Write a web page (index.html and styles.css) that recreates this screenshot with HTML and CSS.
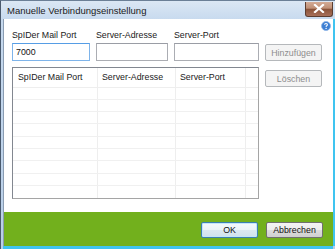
FILE: index.html
```html
<!DOCTYPE html>
<html lang="de">
<head>
<meta charset="utf-8">
<title>Manuelle Verbindungseinstellung</title>
<link rel="stylesheet" href="styles.css">
</head>
<body>
<div class="window">
  <div class="titlebar">
    <span class="title">Manuelle Verbindungseinstellung</span>
    <button class="close" aria-label="Schließen">
      <svg width="12" height="9" viewBox="0 0 12 9"><path d="M2 1 L10 8 M10 1 L2 8" stroke="#fff" stroke-width="2.2" stroke-linecap="square"/></svg>
    </button>
  </div>
  <div class="client">
    <div class="content">
      <span class="help">
        <svg width="10" height="10" viewBox="0 0 10 10"><circle cx="5" cy="5" r="4.5" fill="#3d7fd3" stroke="#8db4e6" stroke-width="0.8"/><path d="M3.6 3.8 Q3.7 2.5 5 2.5 Q6.4 2.5 6.4 3.7 Q6.4 4.5 5.3 5 L5.1 5.9" fill="none" stroke="#fff" stroke-width="1.1"/><circle cx="5.1" cy="7.4" r="0.7" fill="#fff"/></svg>
      </span>
      <div class="grid">
        <label class="lbl">SpIDer Mail Port</label>
        <label class="lbl">Server-Adresse</label>
        <label class="lbl">Server-Port</label>
        <span></span>
        <input class="field focus" value="7000">
        <input class="field">
        <input class="field">
        <button class="btn side" disabled>Hinzufügen</button>
        <div class="table">
          <div class="row head">
            <div class="c c1">SpIDer Mail Port</div>
            <div class="c c2">Server-Adresse</div>
            <div class="c c3">Server-Port</div>
            <div class="c c4"></div>
          </div>
          <div class="row"><div class="c c1"></div><div class="c c2"></div><div class="c c3"></div><div class="c c4"></div></div>
          <div class="row"><div class="c c1"></div><div class="c c2"></div><div class="c c3"></div><div class="c c4"></div></div>
          <div class="row"><div class="c c1"></div><div class="c c2"></div><div class="c c3"></div><div class="c c4"></div></div>
          <div class="row"><div class="c c1"></div><div class="c c2"></div><div class="c c3"></div><div class="c c4"></div></div>
          <div class="row"><div class="c c1"></div><div class="c c2"></div><div class="c c3"></div><div class="c c4"></div></div>
          <div class="row"><div class="c c1"></div><div class="c c2"></div><div class="c c3"></div><div class="c c4"></div></div>
          <div class="row"><div class="c c1"></div><div class="c c2"></div><div class="c c3"></div><div class="c c4"></div></div>
          <div class="row"><div class="c c1"></div><div class="c c2"></div><div class="c c3"></div><div class="c c4"></div></div>
          <div class="row last"><div class="c c1"></div><div class="c c2"></div><div class="c c3"></div><div class="c c4"></div></div>
        </div>
        <button class="btn side del" disabled>Löschen</button>
      </div>
    </div>
    <div class="footer">
      <button class="btn ok">OK</button>
      <button class="btn">Abbrechen</button>
    </div>
  </div>
</div>
</body>
</html>
```
FILE: styles.css
```css
* { box-sizing: border-box; }
html, body { margin: 0; padding: 0; background: #fff; }
body { font-family: "Liberation Sans", Arial, sans-serif; }

.window {
  width: 335px;
  height: 249px;
  display: flex;
  flex-direction: column;
  background: linear-gradient(#dbe7f4, #c6d9ee 20px, #b9cfe8);
  border-left: 1px solid #4a5a6e;
  border-top: 1px solid #6b7f96;
}

.titlebar {
  height: 18px;
  display: flex;
  align-items: center;
  justify-content: space-between;
  padding: 0 2px 0 6px;
}
.title {
  font-size: 9.5px;
  color: #1b1b1b;
  padding-top: 1px;
}
.close {
  width: 28px;
  height: 15px;
  margin-top: -2px;
  border: 1px solid #5c3d30;
  border-top: none;
  border-radius: 0 0 3px 3px;
  background: linear-gradient(#d3ab95, #bf8f75 45%, #8a5238 50%, #a8705a);
  display: flex;
  align-items: center;
  justify-content: center;
  padding: 0;
}

.client {
  flex: 1;
  display: flex;
  flex-direction: column;
  margin: 0 2px 3px 2px;
  border-left: 1px solid #8a9cb2;
  background: #fff;
  box-shadow: 2px 0 0 #3fc4f0, 0 3px 0 #3fc4f0;
}

.content {
  position: relative;
  flex: 1;
  padding: 10px 0 0 8px;
}
.help {
  position: absolute;
  right: 2px;
  top: 2px;
  width: 10px;
  height: 10px;
  display: block;
}
.help svg { display: block; }

.grid {
  display: grid;
  grid-template-columns: 78px 72px 85px 57px;
  grid-template-rows: 14px 18px 138px;
  column-gap: 6px;
}
.lbl {
  font-size: 8.8px;
  color: #1a1a1a;
  line-height: 11px;
  padding-top: 1px;
}
.field {
  height: 18px;
  border: 1px solid #abadb3;
  border-top-color: #9a9da5;
  font: 8.8px "Liberation Sans", Arial, sans-serif;
  padding: 0 0 0 3px;
  color: #111;
  outline: none;
}
.field.focus { border-color: #7eb4ea; border-top-color: #569de5; }

.btn {
  font: 8.8px "Liberation Sans", Arial, sans-serif;
  color: #111;
  height: 16px;
  padding: 0;
  border: 1px solid #707070;
  border-radius: 2px;
  background: linear-gradient(#f3f3f3, #ececec 50%, #dddddd 50%, #cfcfcf);
}
.btn:disabled {
  color: #8d8d8d;
  border-color: #b5b8bb;
  background: #f4f4f4;
}
.side { align-self: start; height: 17px; margin-top: 1px; }
.del { margin-top: 9px; }

.table {
  grid-column: 1 / span 3;
  margin-top: 6px;
  border: 1px solid #828790;
  border-right-color: #a5a5a5;
  border-bottom-color: #a5a5a5;
  display: flex;
  flex-direction: column;
  overflow: hidden;
}
.row {
  display: flex;
  height: 13.7px;
  border-bottom: 1px solid #f0f0f0;
}
.row.head {
  height: 22px;
  border-bottom: 1px solid #eeeeee;
}
.row.last { border-bottom: none; }
.c {
  border-right: 1px solid #eeeeee;
  font-size: 8.8px;
  color: #1a1a1a;
  display: flex;
  align-items: center;
}
.c1 { width: 85px; padding-left: 5px; }
.c2 { width: 78px; padding-left: 4px; }
.c3 { width: 70px; padding-left: 4px; }
.c4 { flex: 1; border-right: none; }

.footer {
  height: 34px;
  background: #72b01d;
  display: flex;
  align-items: center;
  justify-content: flex-end;
  gap: 8px;
  padding: 1px 10px 0 0;
}
.footer .btn { width: 57px; height: 16px; }
.footer .ok {
  border-color: #3c7fb1;
  box-shadow: inset 0 0 0 1px #c4e6f8;
  background: linear-gradient(#f4f9fc, #eaf3f8 50%, #dbe9f1 50%, #d0e2ec);
}
```
